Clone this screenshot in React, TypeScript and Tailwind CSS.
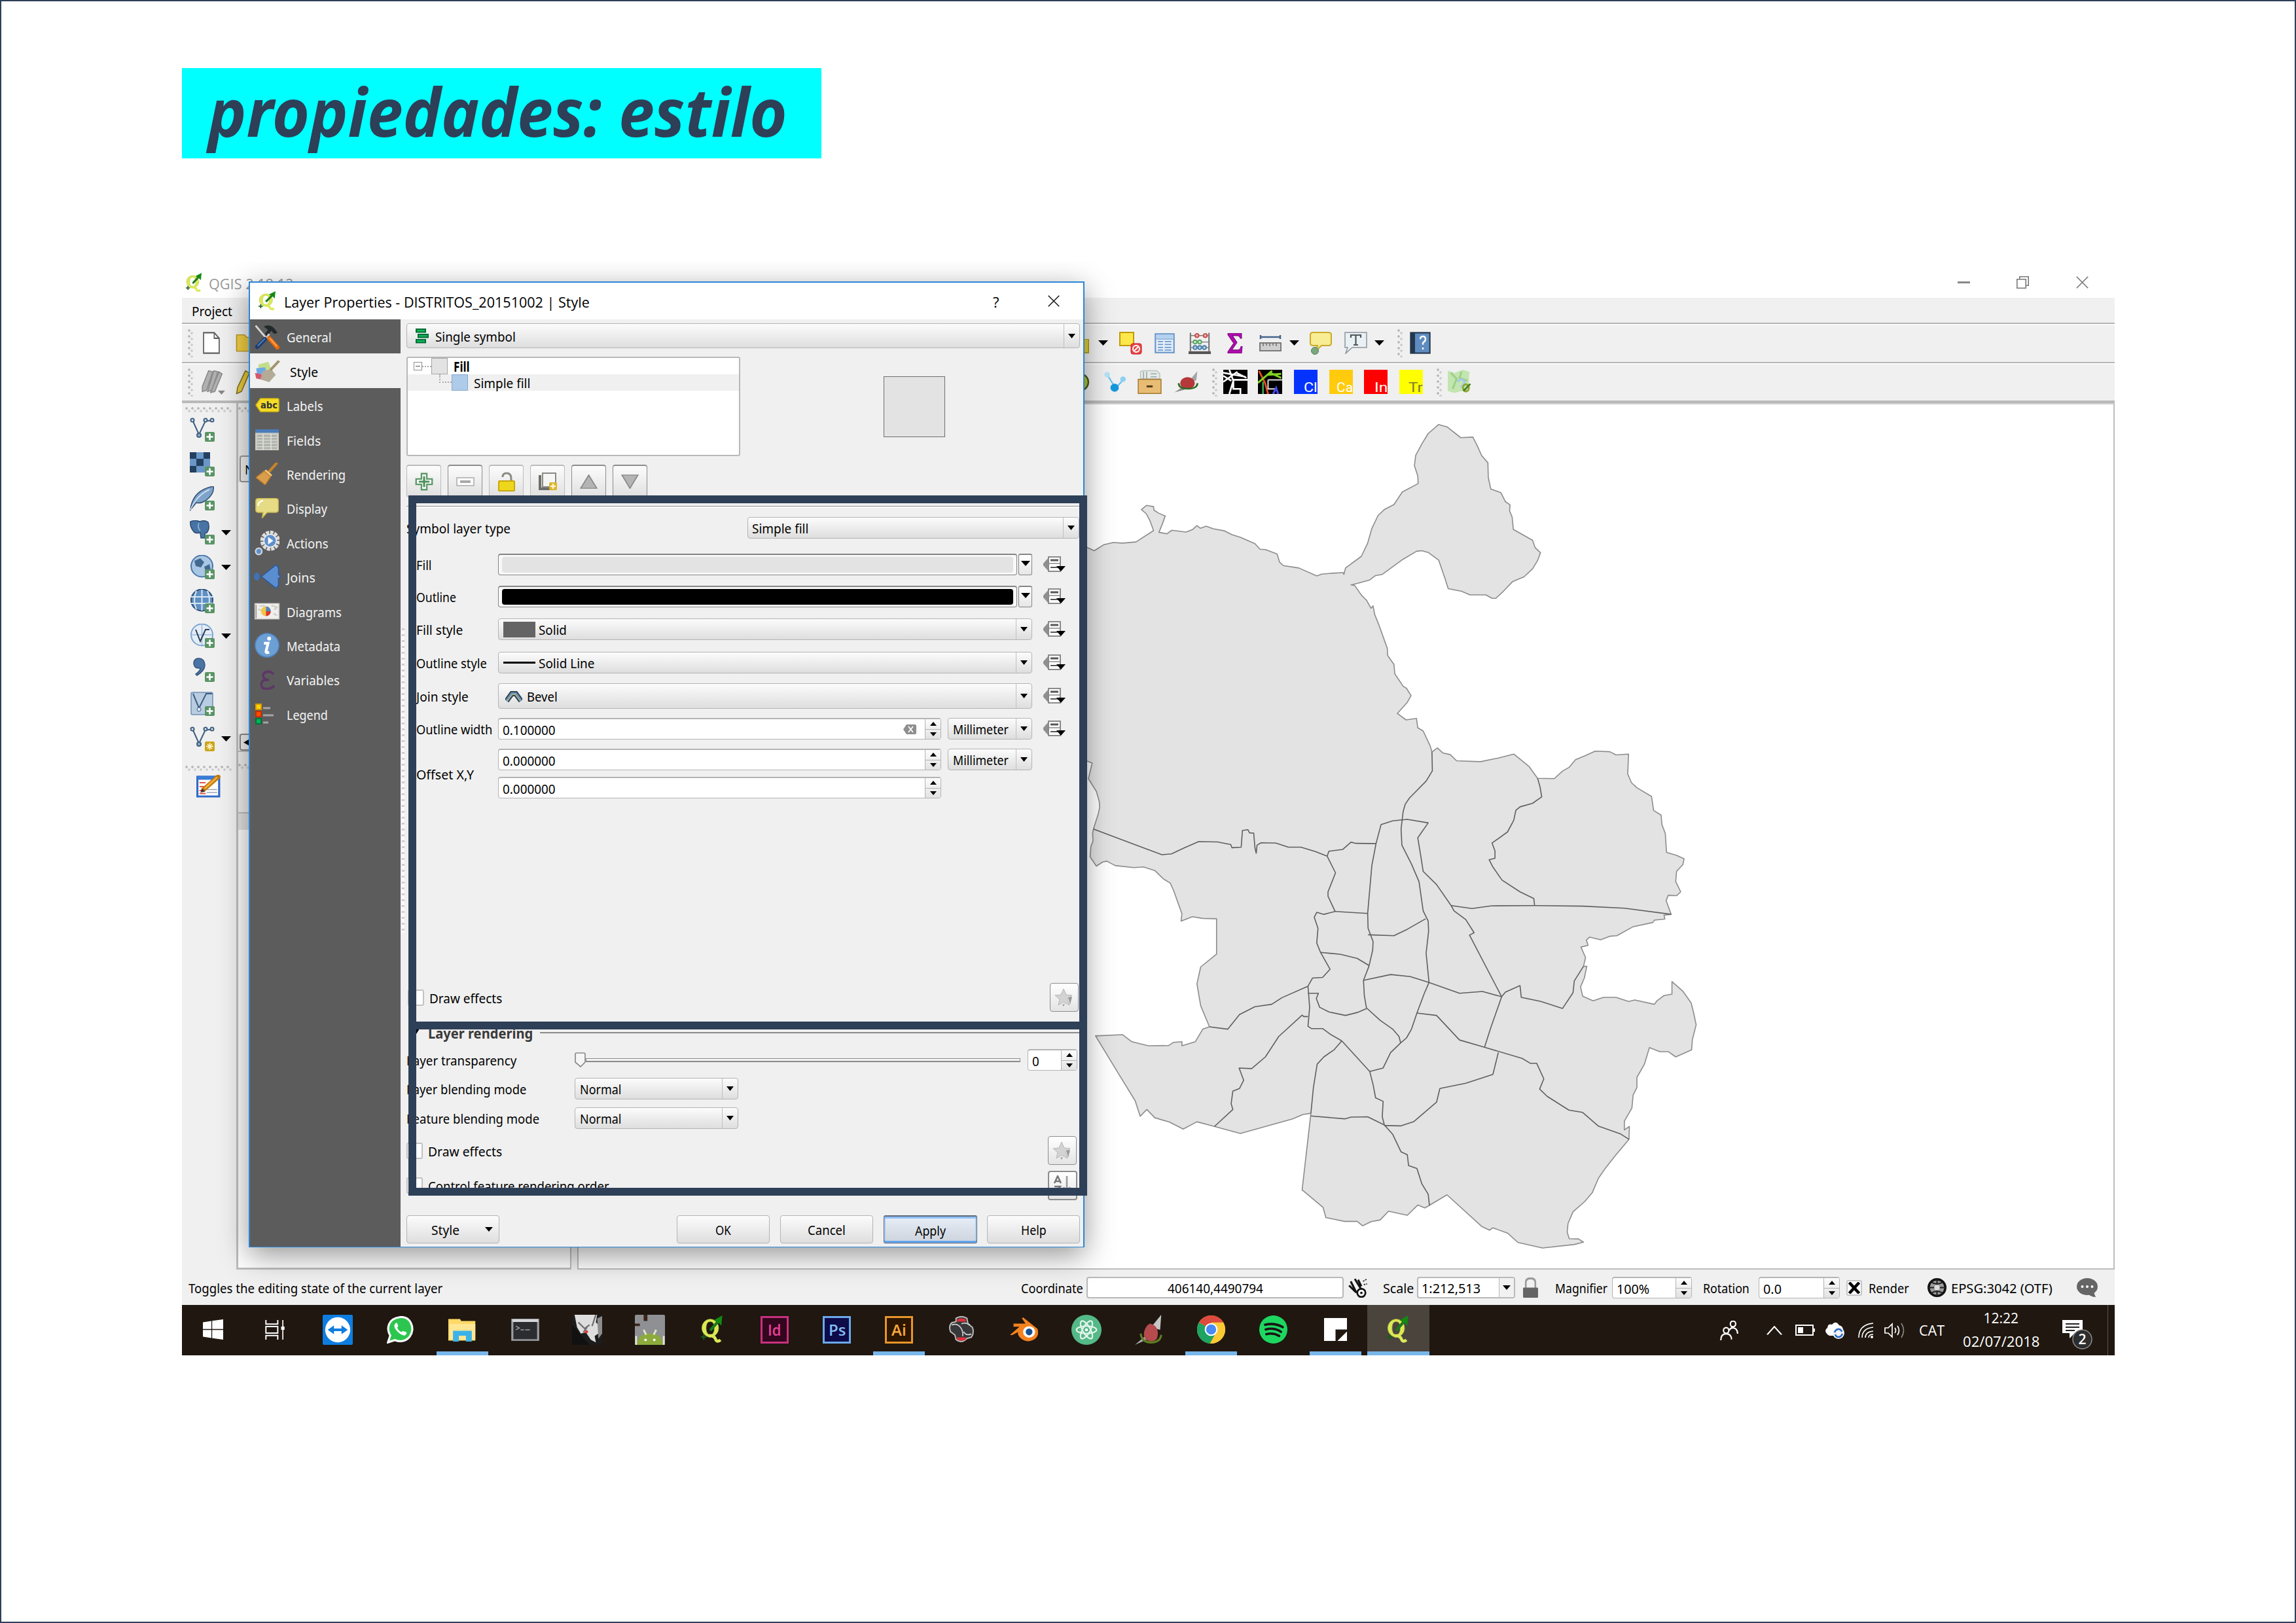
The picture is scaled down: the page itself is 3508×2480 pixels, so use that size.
import { useLayoutEffect, useRef, useState, type ReactNode } from "react";

/* Text set to a fixed advance width; the glyphs are condensed or widened to fill it. */
function T({ w, children, className = "" }: { w: number; children: ReactNode; className?: string }) {
  const ref = useRef<HTMLSpanElement>(null);
  const [scale, setScale] = useState(1);
  useLayoutEffect(() => {
    if (ref.current) setScale(w / ref.current.offsetWidth);
  }, [w]);
  return (
    <span className={`inline-block shrink-0 whitespace-pre leading-none ${className}`} style={{ width: w }}>
      <span ref={ref} className="inline-block origin-left" style={{ transform: `translateY(1px) scaleX(${scale})` }}>
        {children}
      </span>
    </span>
  );
}

function Svg({ className, box = "0 0 24 24", children }: { className: string; box?: string; children: ReactNode }) {
  return (
    <svg viewBox={box} preserveAspectRatio="none" fill="none" className={`block shrink-0 ${className}`}>
      {children}
    </svg>
  );
}

const Down = ({ className = "h-[8px] w-[15px]" }: { className?: string }) => (
  <Svg className={className} box="0 0 10 6"><path d="M0 0h10L5 6z" fill="#000" /></Svg>
);
const Up = () => <Svg className="h-[6px] w-[10px]" box="0 0 10 6"><path d="M0 6h10L5 0z" fill="#000" /></Svg>;

const GripV = ({ className = "" }: { className?: string }) => (
  <div className={`h-[44px] w-[10px] shrink-0 bg-[radial-gradient(circle_at_3px_3px,#bdbdbd_1.8px,transparent_2px),radial-gradient(circle_at_7px_7px,#d0d0d0_1.8px,transparent_2px)] bg-[length:10px_9px] ${className}`} />
);
const GripH = ({ className = "" }: { className?: string }) => (
  <div className={`h-[9px] shrink-0 bg-[radial-gradient(circle_at_2px_2px,#bdbdbd_1.6px,transparent_2px),radial-gradient(circle_at_6px_6px,#d0d0d0_1.6px,transparent_2px)] bg-[length:9px_9px] ${className}`} />
);

function QLogo({ className }: { className: string }) {
  return (
    <Svg className={className} box="0 0 24 30">
      <path d="M10 4a9 9.500 0 100 19 9 9.500 0 000-19zm0 2.500q4.500 0 4.500 7T10 20.500 5.500 13.500 10 6.500z" fill="#dbe957" fillRule="evenodd" stroke="#b9c93c" strokeWidth=".6" />
      <path d="M8 22c5-1 7 1 8 4 1 2 3 2 5 0" stroke="#dbe957" strokeWidth="3.200" />
      <path d="M10 16L18 7" stroke="#1b7a1b" strokeWidth="3" />
      <path d="M14 5l9-5-1 11-3-3z" fill="#128a12" />
      <path d="M0 23h6M3 20v6" stroke="#1c5a1c" strokeWidth="1.500" />
    </Svg>
  );
}

/* ---------- form controls ---------- */

const face = "border-[1.5px] border-[#b4b4b4] rounded-[4px] bg-linear-to-b from-[#fcfcfc] to-[#dedede]";

function Combo({ className, children, arrow = "w-[24px]" }: { className: string; children: ReactNode; arrow?: string }) {
  return (
    <div className={`flex shrink-0 items-center ${face} ${className}`}>
      <div className="flex min-w-0 flex-1 items-center">{children}</div>
      <div className={`flex h-full shrink-0 items-center justify-center border-l-[1.5px] border-[#c0c0c0] ${arrow}`}>
        <Down className="h-[7px] w-[11px]" />
      </div>
    </div>
  );
}

function Spin({ className, children }: { className: string; children: ReactNode }) {
  return (
    <div className={`flex shrink-0 items-center rounded-[4px] border-[1.5px] border-t-2 border-[#b4b4b4] bg-white ${className}`}>
      <div className="flex min-w-0 flex-1 items-center pl-[6px]">{children}</div>
      <div className="flex h-full w-[24px] shrink-0 flex-col border-l-[1.5px] border-[#b4b4b4] bg-linear-to-b from-[#fcfcfc] to-[#e2e2e2]">
        <div className="flex flex-1 items-center justify-center border-b-[1.5px] border-[#b4b4b4]"><Up /></div>
        <div className="flex flex-1 items-center justify-center"><Down className="h-[6px] w-[10px]" /></div>
      </div>
    </div>
  );
}

const DataDefined = () => (
  <Svg className="ml-[16px] h-[25px] w-[36px]" box="0 0 36 25">
    <path d="M9 2L1 11v3l8 9z" fill="#8f8f8f" />
    <rect x="9" y="1" width="18" height="22" fill="#fff" stroke="#8a8a8a" strokeWidth="2" />
    <path d="M9 11h18" stroke="#8a8a8a" strokeWidth="1.500" />
    <path d="M12 6h12" stroke="#555" strokeWidth="3" />
    <path d="M12 17h12" stroke="#555" strokeWidth="2" />
    <path d="M21 15h14l-7 8z" fill="#000" />
  </Svg>
);

function ColorButton({ swatch }: { swatch: string }) {
  return (
    <>
      <div className="h-[33px] w-[793px] shrink-0 rounded-[4px] border-[1.5px] border-t-2 border-[#858585] bg-[#f8f8f8] px-[5px] pt-[3px] pb-[3px]">
        <div className={`h-full rounded-[4px] ${swatch}`} />
      </div>
      <div className="ml-[2px] flex h-[33px] w-[21px] shrink-0 justify-center rounded-[3px] border-[1.5px] border-t-2 border-[#858585] bg-linear-to-b from-white to-[#e6e6e6] pt-[9px]">
        <Down className="h-[8px] w-[14px]" />
      </div>
    </>
  );
}

function Field({ label, w, className, children }: { label: string; w: number; className: string; children: ReactNode }) {
  return (
    <div className={`flex shrink-0 items-center pl-[24px] ${className}`}>
      <div className="flex w-[125px] shrink-0"><T w={w}>{label}</T></div>
      {children}
    </div>
  );
}

const Check = () => <div className="size-[25px] shrink-0 rounded-[3px] border-2 border-[#c2c2c2] bg-white" />;

const StarButton = () => (
  <div className="flex size-[44px] shrink-0 items-center justify-center rounded-[4px] border-[1.5px] border-[#8c8c8c] bg-linear-to-b from-white to-[#e4e4e4]">
    <Svg className="h-[28px] w-[30px]" box="0 0 30 28">
      <path d="M14 1l4 9 9 1-7 6 3 9-9-5-8 5 2-9-7-6 9-1z" fill="#d3d3d3" stroke="#b8b8b8" />
      <path d="M21 14l6-1-3 12zM12 25l4-1-2 4z" fill="#999" />
    </Svg>
  </div>
);

/* ---------- dialog ---------- */

const sideIcons: Record<string, ReactNode> = {
  General: (
    <Svg className="h-[38px] w-[38px]">
      <path d="M1 1l11 13" stroke="#d8d8d8" strokeWidth="1.800" />
      <path d="M9 2c5-3 10 0 13 6l-3 1-3-3-4 5-2-2 3-4z" fill="#23282b" />
      <path d="M14 9l-3 5" stroke="#ccc" strokeWidth="2" />
      <path d="M10 14L2.500 21.500" stroke="#1f3c6e" strokeWidth="4" strokeLinecap="round" />
      <path d="M10 13.500L3 20.500" stroke="#4f7fc0" strokeWidth="1.300" />
      <path d="M14 13l8 9" stroke="#ea6a0c" strokeWidth="4" strokeLinecap="round" />
      <path d="M14.500 13l7 8" stroke="#ffa851" strokeWidth="1.200" />
    </Svg>
  ),
  Style: (
    <Svg className="h-[34px] w-[40px]">
      <path d="M4 5l9-3 3 8-11 5z" fill="#c3dd8a" />
      <path d="M2 9l8-1 2 6-9 2z" fill="#6aa9e6" />
      <path d="M1 14l8 2 5 7-12-3z" fill="#d4566f" />
      <path d="M8 12l8-2 4 6-6 8-8-3z" fill="#b3aa98" />
      <path d="M15 11l8-10" stroke="#a2936d" strokeWidth="2.500" />
    </Svg>
  ),
  Labels: (
    <Svg className="h-[22px] w-[37px]" box="0 0 37 22">
      <path d="M8 1h26q2 0 2 2v16q0 2-2 2H8L1 11z" fill="#f5dc28" stroke="#d5b80c" strokeWidth="1.500" />
      <text x="8" y="16" fontSize="14" fontWeight="700" fontFamily="DejaVu Sans" fill="#333" textLength="26" lengthAdjust="spacingAndGlyphs">abc</text>
    </Svg>
  ),
  Fields: (
    <Svg className="h-[32px] w-[36px]">
      <rect width="24" height="24" fill="#c9cbc4" />
      <rect width="24" height="4" fill="#4a7cb8" />
      <path d="M2 7.500h20M2 11h20M2 14.500h20M2 18h20M2 21.500h20" stroke="#9b9e96" />
      <path d="M8 5v19M16 5v19" stroke="#e2e3de" />
    </Svg>
  ),
  Rendering: (
    <Svg className="h-[34px] w-[34px]">
      <path d="M13 11L22 1" stroke="#c58428" strokeWidth="3" strokeLinecap="round" />
      <path d="M9 9l7 6-6 9-10-8z" fill="#d99e4b" stroke="#b97a26" />
      <path d="M10 8l7 6" stroke="#f0c27c" strokeWidth="2" />
    </Svg>
  ),
  Display: (
    <Svg className="h-[32px] w-[36px]">
      <path d="M3 .5h18q2.500 0 2.500 3v10q0 3-2.500 3h-9L7 23l1-6.500H3q-2.500 0-2.500-3v-10q0-3 2.500-3z" fill="#e6dc85" stroke="#c9b650" />
      <path d="M3 9q0-5 5-6" stroke="#fff" strokeWidth="1.500" />
    </Svg>
  ),
  Actions: (
    <Svg className="h-[39px] w-[38px]">
      <circle cx="15" cy="10" r="7.500" stroke="#dedede" strokeWidth="4" strokeDasharray="3 .9" />
      <circle cx="15" cy="10" r="6" fill="#5e90cc" stroke="#eee" />
      <path d="M13 6.500v7l5-3.500z" fill="#fff" />
      <circle cx="4" cy="20" r="3" fill="#5e90cc" stroke="#c9d4e2" strokeWidth="1.500" />
    </Svg>
  ),
  Joins: (
    <Svg className="h-[36px] w-[42px]">
      <ellipse cx="3" cy="12" rx="2.500" ry="4" fill="#3f72b8" />
      <path d="M7 12L20 0l2 3v7l2 2-2 2v7l-2 3z" fill="#5b8ed0" stroke="#2d5a9c" />
    </Svg>
  ),
  Diagrams: (
    <Svg className="h-[26px] w-[40px]">
      <rect x="1" y="1" width="22" height="22" fill="#f0efec" stroke="#c8c8c4" />
      <path d="M2 3v19" stroke="#9a9a9a" />
      <path d="M5 5l5-1M4 9l3 2M16 4l5 2-2 4M18 15l3 3" stroke="#cfcfca" strokeWidth="2" />
      <path d="M11 5a4.500 7 0 000 14z" fill="#f1c640" /><path d="M11 5a4.500 7 0 014.500 7H11z" fill="#5684b8" /><path d="M11 12h4.500a4.500 7 0 01-4.500 7z" fill="#d8382f" />
    </Svg>
  ),
  Metadata: (
    <Svg className="size-[38px]">
      <circle cx="12" cy="12" r="11.500" fill="#6c9fd4" stroke="#4d80ba" />
      <circle cx="14" cy="5.500" r="1.900" fill="#fff" />
      <path d="M9 10h4l-2 8q0 2 3 .5" stroke="#fff" strokeWidth="2.600" />
    </Svg>
  ),
  Variables: (
    <Svg className="h-[30px] w-[25px]">
      <path d="M21 5Q17 1 11 2 4 4 6 8t8 4Q4 11 3 17q0 6 8 6 7 0 11-4" stroke="#5d3767" strokeWidth="3.200" />
    </Svg>
  ),
  Legend: (
    <Svg className="h-[32px] w-[29px]" box="0 0 29 32">
      <rect x="1" y="1" width="8" height="8" fill="#ffd400" stroke="#d79b00" strokeWidth="2" />
      <rect x="1" y="12" width="8" height="8" fill="#ff4d00" stroke="#c62f00" strokeWidth="2" />
      <rect x="1" y="23" width="8" height="8" fill="#00b45a" stroke="#00713a" strokeWidth="2" />
      <path d="M12 7h11M12 18h16M12 29h8" stroke="#a5a5a5" strokeWidth="3" />
    </Svg>
  ),
};

const sections: [string, number][] = [
  ["General", 69], ["Style", 43], ["Labels", 56], ["Fields", 52], ["Rendering", 90], ["Display", 62],
  ["Actions", 64], ["Joins", 44], ["Diagrams", 84], ["Metadata", 82], ["Variables", 81], ["Legend", 63],
];

function Sidebar() {
  return (
    <div className="flex w-[230px] shrink-0 flex-col bg-[#5c5c5c] text-[#f4f4f4]">
      {sections.map(([name, w]) => (
        <div key={name} className={`flex h-[52.4px] shrink-0 items-center pt-px ${name === "Style" ? "bg-[#f0f0f0] text-black" : ""}`}>
          <div className={`flex w-[52px] ${name === "Legend" ? "pl-[8px]" : "justify-center"}`}>{sideIcons[name]}</div>
          <T w={w} className={name === "Style" ? "ml-[9px]" : "ml-[4px]"}>{name}</T>
        </div>
      ))}
    </div>
  );
}

function ToolButton({ dark, children }: { dark?: boolean; children: ReactNode }) {
  return (
    <div className={`flex h-[50px] w-[53px] shrink-0 items-center justify-center rounded-[4px] border-[1.5px] border-t-2 bg-linear-to-b from-[#fcfcfc] to-[#e0e0e0] ${dark ? "border-[#8c8c8c]" : "border-[#bcbcbc]"}`}>
      {children}
    </div>
  );
}

function StylePanel() {
  return (
    <div className="relative flex flex-1 flex-col bg-[#f0f0f0]">
      <Combo className="mt-[6px] ml-[9px] h-[38px] w-[1029px]">
        <Svg className="ml-[13px] h-[23px] w-[20px]" box="0 0 20 23">
          <rect x="1" y="1" width="14" height="4.500" fill="#0cb95c" stroke="#046b35" strokeWidth="2" />
          <rect x="4" y="9" width="15" height="4.500" fill="#0cb95c" stroke="#046b35" strokeWidth="2" />
          <rect x="1" y="17" width="14" height="4.500" fill="#0cb95c" stroke="#046b35" strokeWidth="2" />
        </Svg>
        <T w={123} className="ml-[10px]">Single symbol</T>
      </Combo>

      <div className="mt-[13px] flex h-[152px] shrink-0 pl-[9px]">
        <div className="w-[510px] rounded-[3px] border-2 border-[#b8b8b8] bg-white">
          <div className="flex h-[25px] items-center pl-[9px]">
            <div className="flex size-[13px] items-center justify-center border border-[#909090]"><div className="h-px w-[7px] bg-[#555]" /></div>
            <div className="w-[14px] border-t-2 border-dotted border-[#aaa]" />
            <div className="h-[25px] w-[25px] border-[1.5px] border-[#a6a6a6] bg-[#e3e3e3]" />
            <T w={25} className="ml-[9px] font-bold">Fill</T>
          </div>
          <div className="flex h-[25px] items-center bg-[#f0f0f0] pl-[48px]">
            <div className="mb-[12px] h-[13px] w-[19px] border-b-2 border-l-2 border-dotted border-[#aaa]" />
            <div className="h-[25px] w-[25px] border-[1.5px] border-[#88a9cd] bg-[#aecbea]" />
            <T w={86} className="ml-[9px]">Simple fill</T>
          </div>
        </div>
        <div className="mt-[30px] ml-[219px] h-[93px] w-[94px] border-[1.5px] border-[#6e6e6e] bg-[#e3e3e3]" />
      </div>

      <div className="mt-[13px] flex shrink-0 gap-[10px] pl-[9px]">
        <ToolButton><Svg className="h-[28px] w-[28px]"><path d="M8.500 1.500h7v7h7v7h-7v7h-7v-7h-7v-7h7z" fill="#fff" stroke="#5d9968" strokeWidth="2" /><path d="M12 5v14M5 12h14" stroke="#4f8f5b" strokeWidth="2.600" /></Svg></ToolButton>
        <ToolButton dark><Svg className="h-[14px] w-[28px]" box="0 0 28 14"><rect x="1" y="1" width="26" height="12" fill="#fff" stroke="#bdbdbd" strokeWidth="2" /><path d="M6 7h16" stroke="#a9a9a9" strokeWidth="4" /></Svg></ToolButton>
        <ToolButton><Svg className="h-[30px] w-[26px]" box="0 0 26 30"><path d="M7 8q0-6 6-6 7 0 7 8v5" stroke="#8b8b85" strokeWidth="3" /><rect x="1" y="14" width="24" height="15" rx="1" fill="#eed61c" stroke="#c9a70a" strokeWidth="2" /></Svg></ToolButton>
        <ToolButton><Svg className="h-[28px] w-[30px]" box="0 0 30 28"><path d="M3 4v21h18" stroke="#6d6f6b" strokeWidth="4" /><rect x="7" y="1" width="20" height="21" fill="#f6f6f6" stroke="#8a8a86" strokeWidth="2" /><rect x="17" y="15" width="12" height="12" rx="2" fill="#dcb42a" /><path d="M23 17v8M19 21h8" stroke="#fff6cf" strokeWidth="2.400" /></Svg></ToolButton>
        <ToolButton dark><Svg className="h-[22px] w-[27px]"><path d="M12 1l11 22H1z" fill="#b4b4b4" stroke="#858585" strokeWidth="1.500" /></Svg></ToolButton>
        <ToolButton dark><Svg className="h-[22px] w-[27px]"><path d="M12 23L1 1h22z" fill="#b4b4b4" stroke="#858585" strokeWidth="1.500" /></Svg></ToolButton>
      </div>

      <div className="mt-[13px] ml-[9px] h-[3px] w-[1028px] shrink-0 border-t-[1.5px] border-b-[1.5px] border-t-[#9a9a9a] border-b-white" />

      <div className="mt-[14px] flex shrink-0 items-center pl-[9px]">
        <T w={159}>Symbol layer type</T>
        <Combo className="ml-[362px] h-[33px] w-[507px]"><T w={86} className="ml-[6px]">Simple fill</T></Combo>
      </div>

      <Field label="Fill" w={24} className="mt-[23px] h-[33px]"><ColorButton swatch="bg-[#e3e3e3]" /><DataDefined /></Field>
      <Field label="Outline" w={61} className="mt-[16px] h-[33px]"><ColorButton swatch="bg-black" /><DataDefined /></Field>
      <Field label="Fill style" w={71} className="mt-[17px] h-[33px]">
        <Combo className="h-[33px] w-[816px]"><div className="ml-[7px] h-[24px] w-[49px] bg-[#646464]" /><T w={43} className="ml-[5px]">Solid</T></Combo>
        <DataDefined />
      </Field>
      <Field label="Outline style" w={108} className="mt-[18px] h-[33px]">
        <Combo className="h-[33px] w-[816px]"><div className="ml-[7px] h-[3px] w-[49px] bg-black" /><T w={85} className="ml-[5px]">Solid Line</T></Combo>
        <DataDefined />
      </Field>
      <Field label="Join style" w={80} className="mt-[15px] h-[39px]">
        <Combo className="h-[39px] w-[816px]">
          <Svg className="mt-[4px] ml-[10px] h-[20px] w-[26px]" box="0 0 26 20">
            <path d="M2 15L10 4h6l8 11" stroke="#2f3f4f" strokeWidth="8" /><path d="M2 15L10 4h6l8 11" stroke="#6f96c0" strokeWidth="4" /><path d="M3 15l8-10h4l8 10" stroke="#d8c64a" strokeWidth="1" />
          </Svg>
          <T w={47} className="ml-[7px]">Bevel</T>
        </Combo>
        <DataDefined />
      </Field>
      <Field label="Outline width" w={116} className="mt-[14px] h-[33px]">
        <Spin className="h-[33px] w-[677px]">
          <T w={81}>0.100000</T>
          <Svg className="ml-[531px] h-[15px] w-[20px]" box="0 0 20 15"><path d="M5 0h13q2 0 2 2v11q0 2-2 2H5L0 7.500z" fill="#8f8f8f" /><path d="M8 3l7 9M15 3l-7 9" stroke="#fff" strokeWidth="1.700" /></Svg>
        </Spin>
        <Combo className="ml-[10px] h-[33px] w-[129px]"><T w={85} className="ml-[7px]">Millimeter</T></Combo>
        <DataDefined />
      </Field>
      <Field label="Offset X,Y" w={88} className="mt-[14px] h-[76px]">
        <div className="flex flex-col gap-[10px]">
          <Spin className="h-[33px] w-[677px]"><T w={81}>0.000000</T></Spin>
          <Spin className="h-[33px] w-[677px]"><T w={81}>0.000000</T></Spin>
        </div>
        <Combo className="mb-[43px] ml-[10px] h-[33px] w-[129px]"><T w={85} className="ml-[7px]">Millimeter</T></Combo>
      </Field>

      <div className="mt-[282px] flex h-[44px] shrink-0 items-center pl-[11px]">
        <Check /><T w={111} className="ml-[8px]">Draw effects</T><div className="ml-[837px]"><StarButton /></div>
      </div>

      <div className="mt-[22px] flex h-[20px] shrink-0 items-center pl-[14px] text-[#3a3a3a]">
        <Down className="mr-[13px] h-[12px] w-[15px]" />
        <T w={160} className="font-bold">Layer rendering</T>
        <div className="ml-[11px] h-[2.5px] w-[824px] bg-[#8b8b8b]" />
      </div>

      <div className="mt-[15px] flex h-[33px] shrink-0 items-center pl-[9px]">
        <T w={168}>Layer transparency</T>
        <Svg className="ml-[89px] h-[23px] w-[17px]" box="0 0 17 23"><path d="M1 3q0-2 2-2h11q2 0 2 2v12l-7 7-8-7z" fill="#f5f5f5" stroke="#8a8a8a" strokeWidth="1.700" /></Svg>
        <div className="h-[6px] w-[664px] border-[1.5px] border-b-2 border-[#8a8a8a] bg-[#f4f4f4]" />
        <Spin className="ml-[11px] h-[33px] w-[76px]"><T w={11}>0</T></Spin>
      </div>
      <div className="mt-[11px] flex h-[33px] shrink-0 items-center pl-[9px]">
        <T w={183}>Layer blending mode</T>
        <Combo className="ml-[74px] h-[33px] w-[250px]"><T w={63} className="ml-[7px]">Normal</T></Combo>
      </div>
      <div className="mt-[12px] flex h-[33px] shrink-0 items-center pl-[9px]">
        <T w={203}>Feature blending mode</T>
        <Combo className="ml-[54px] h-[33px] w-[250px]"><T w={63} className="ml-[7px]">Normal</T></Combo>
      </div>
      <div className="mt-[11px] flex h-[44px] shrink-0 items-center pl-[9px]">
        <Check /><T w={113} className="ml-[8px]">Draw effects</T><div className="ml-[834px]"><StarButton /></div>
      </div>
      <div className="mt-[9px] flex h-[45px] shrink-0 items-center pl-[9px]">
        <Check /><T w={277} className="ml-[8px]">Control feature rendering order</T>
        <div className="ml-[670px] flex size-[45px] items-start justify-center rounded-[4px] border-2 border-[#8c8c8c] bg-linear-to-b from-white to-[#e4e4e4] pt-[5px]">
          <Svg className="h-[30px] w-[30px]" box="0 0 30 30"><path d="M2 12L7 1l5 11M4 9h6M2 17h9L2 28h10" stroke="#777" strokeWidth="2.500" /><path d="M21 1v26M16 18l5 8 5-8" stroke="#999" strokeWidth="2.500" /></Svg>
        </div>
      </div>

      <div className="mt-[23px] flex h-[43px] shrink-0 items-stretch pl-[9px]">
        <div className={`flex w-[142px] items-center ${face}`}><T w={43} className="ml-[37px]">Style</T><Down className="ml-[39px] h-[7px] w-[12px]" /></div>
        <div className={`ml-[271px] flex w-[142px] items-center justify-center ${face}`}><T w={24}>OK</T></div>
        <div className={`ml-[16px] flex w-[142px] items-center justify-center ${face}`}><T w={58}>Cancel</T></div>
        <div className="ml-[16px] flex w-[143px] items-center justify-center rounded-[3px] border-[1.5px] border-t-2 border-[#5f6b78] bg-linear-to-b from-[#e8eef7] to-[#ccd3dc] shadow-[inset_0_3px_0_#8fc0f8,inset_0_-3px_0_#64a5ee,inset_2px_0_0_#a9ccf5,inset_-2px_0_0_#a9ccf5]"><T w={47}>Apply</T></div>
        <div className={`ml-[15px] flex w-[142px] items-center justify-center ${face}`}><T w={39}>Help</T></div>
      </div>

      {/* splitter handle */}
      <div className="absolute top-[472px] left-[2px] h-[466px] w-[4px] bg-[repeating-linear-gradient(to_bottom,#cfcfcf_0_3px,#fafafa_3px_9px)]" />
    </div>
  );
}

function Dialog() {
  return (
    <div className="absolute top-[30px] left-[102px] flex h-[1476px] w-[1277px] flex-col border-2 border-b-[1.5px] border-[#2a86d6] bg-[#f0f0f0] shadow-[0_12px_42px_rgba(0,0,0,0.42)]">
      <div className="flex h-[56px] shrink-0 items-center bg-white pl-[13px] font-['Open_Sans',sans-serif] text-[22px]">
        <QLogo className="h-[30px] w-[27px]" />
        <T w={467} className="ml-[12px]">Layer Properties - DISTRITOS_20151002 | Style</T>
        <T w={10} className="ml-[616px]">?</T>
        <Svg className="ml-[74px] size-[18px]"><path d="M1 1l22 22M23 1L1 23" stroke="#111" strokeWidth="2" /></Svg>
      </div>
      <div className="flex flex-1"><Sidebar /><StylePanel /></div>
    </div>
  );
}

/* ---------- main window ---------- */

const plus = <g><rect x="23" y="22" width="15" height="15" rx="2" fill="#5a9466" /><path d="M30.500 24.500v10M25.500 29.500h10" stroke="#fff" strokeWidth="2.600" /></g>;
const vee = <g stroke="#3f5f80" strokeWidth="2"><path d="M5 6l9 20L24 5h10" /><circle cx="4" cy="4" r="2.500" fill="#e6eef6" /><circle cx="24" cy="4" r="2.500" fill="#e6eef6" /><circle cx="34" cy="4" r="2.500" fill="#e6eef6" /><circle cx="14" cy="27" r="3" fill="#8fb0d0" /></g>;

const tools: { art: ReactNode; menu?: boolean }[] = [
  { art: <>{vee}{plus}</> },
  { art: <><rect x="0" y="0" width="31" height="31" fill="#6b97c7" /><path d="M0 0h10v10H0zM21 0h10v10H21zM10 10h11v11H10zM0 21h10v10H0z" fill="#23405f" />{plus}</> },
  { art: <><path d="M1 36Q4 6 36 0q2 12-12 22-8 5-14 3z" fill="#7fa4cc" stroke="#2e4d70" strokeWidth="1.500" /><path d="M1 36Q10 14 30 5" stroke="#dbe8f5" strokeWidth="1.500" />{plus}</> },
  { art: <><path d="M1 2q8-3 14 0 8-3 13 1 3 10-2 16l-3 1v7h-6l-1-8q-8 2-11-3Q0 10 1 2z" fill="#4774a5" stroke="#2b4c72" strokeWidth="1.500" /><path d="M14 4q-3 7 2 12" stroke="#9ab9da" strokeWidth="1.500" />{plus}</>, menu: true },
  { art: <><circle cx="18.500" cy="17" r="16.500" fill="#a9c6e4" stroke="#4a77a8" strokeWidth="2" /><path d="M7 9l9-4 6 6-5 8-8-2zM22 18l8-4 2 9-7 5z" fill="#41698f" />{plus}</>, menu: true },
  { art: <><circle cx="18.500" cy="17" r="16.500" fill="#5f8fc2" stroke="#2d4f77" strokeWidth="2" /><path d="M2 12h33M2 22h33M18.500 1v32M10 3q-6 14 0 28M27 3q6 14 0 28" stroke="#d7e6f4" strokeWidth="2" />{plus}</> },
  { art: <><circle cx="18.500" cy="17" r="16.500" fill="#e4edf7" stroke="#7ca3cf" strokeWidth="2" /><path d="M2 17h33M18.500 1v32" stroke="#9bbadd" strokeWidth="1.500" /><path d="M9 9l7 18L24 9h6" stroke="#2a3c50" strokeWidth="2" />{plus}</>, menu: true },
  { art: <><path d="M12 1q10-1 11 10 0 9-12 16l-2-2q7-5 7-9-9 1-10-7 0-7 6-8z" fill="#4a74a4" stroke="#34557d" strokeWidth="1.500" />{plus}</> },
  { art: <><rect x="2" y="1" width="33" height="34" rx="2" fill="#b9cde2" stroke="#6d8fb3" strokeWidth="1.500" /><path d="M5 3l9 22L25 3h9" stroke="#3f5f80" strokeWidth="2" /><circle cx="14" cy="27" r="3" fill="#dbe8f5" stroke="#3f5f80" />{plus}</> },
  { art: <>{vee}<rect x="23" y="23" width="15" height="15" rx="2" fill="#c9a51c" /><path d="M30.500 25v11M25 30.500h11M27 27l7 7M34 27l-7 7" stroke="#fff4c4" strokeWidth="1.600" /></>, menu: true },
];

function Toolbox() {
  return (
    <div className="flex w-[83px] shrink-0 flex-col">
      <GripH className="mt-[6px] ml-[5px] w-[72px]" />
      <div className="flex flex-col">
        {tools.map((t, i) => (
          <div key={i} className="flex h-[52.4px] items-center pl-[12px]">
            <Svg className="size-[38px]" box="0 0 38 38">{t.art}</Svg>
            {t.menu && <div className="ml-[10px]"><Down /></div>}
          </div>
        ))}
      </div>
      <GripH className="mt-[15px] ml-[5px] w-[72px]" />
      <Svg className="mt-[5px] ml-[22px] h-[36px] w-[38px]">
        <rect x="1" y="2" width="21" height="20" fill="#fff" stroke="#2f6bc8" strokeWidth="2" />
        <rect x="1" y="1" width="21" height="4" fill="#3a7ad8" />
        <path d="M3 8h6M3 12h5M3 16h4M3 19h6" stroke="#e0554a" strokeWidth="1.200" /><path d="M10 15h10M10 18h10" stroke="#9aa4b4" />
        <path d="M7 15L21 2" stroke="#c47a12" strokeWidth="4.500" strokeLinecap="round" /><path d="M8 14L20 2.500" stroke="#f0ad3c" strokeWidth="1.800" /><path d="M4 18l1.500-4 3 3z" fill="#333" />
      </Svg>
    </div>
  );
}

function AppToolbar() {
  return (
    <div className="flex h-[60px] shrink-0 items-center border-t-2 border-[#b6b6b6] shadow-[inset_0_2px_0_#fbfbfb]">
      <GripV className="ml-[8px]" />
      <Svg className="ml-[14px] h-[34px] w-[26px]"><path d="M1 1h15l7 6v16H1z" fill="#fff" stroke="#5f5f5f" strokeWidth="1.600" /><path d="M16 1v6h7" stroke="#5f5f5f" strokeWidth="1.500" /></Svg>
      <Svg className="ml-[24px] h-[30px] w-[36px]"><path d="M1 2h8l2 3h12v17H1z" fill="#f3cf45" stroke="#b8921a" /></Svg>
      <Svg className="ml-[1247px] mt-[10px] h-[22px] w-[21px]"><rect x="0" y="0" width="23" height="23" fill="#e6d233" stroke="#b89d18" strokeWidth="2" /></Svg>
      <div className="ml-[14px]"><Down /></div>
      <Svg className="ml-[17px] h-[35px] w-[35px]" box="0 0 35 35">
        <rect x="1" y="1" width="21" height="20" fill="#fde74a" stroke="#c39a06" strokeWidth="2" />
        <rect x="18" y="18" width="16" height="16" rx="3" fill="#e8464a" stroke="#c9151b" /><circle cx="26" cy="26" r="5" stroke="#fff" strokeWidth="2" /><path d="M23 29l6-6" stroke="#fff" strokeWidth="2" />
      </Svg>
      <Svg className="ml-[19px] h-[31px] w-[31px]"><rect x="1" y="1" width="22" height="22" fill="#e5effa" stroke="#6c97ca" strokeWidth="1.700" /><rect x="2" y="2" width="20" height="4" fill="#b2d2ef" /><path d="M2 7h20" stroke="#6c97ca" /><path d="M4 10h6M12 10h8M4 13.500h6M12 13.500h8M4 17h6M12 17h8M4 20h6M12 20h8" stroke="#6c97ca" strokeWidth="1.400" /></Svg>
      <Svg className="ml-[21px] h-[34px] w-[34px]"><path d="M2 1v20M22 1v20" stroke="#777" strokeWidth="1.500" /><path d="M0 22.500h24" stroke="#555" strokeWidth="3" /><path d="M2 4h20M2 11h20M2 17h20" stroke="#777" /><g fill="#f0b0b0" stroke="#c8484a" strokeWidth="1.300"><circle cx="9" cy="4" r="2" /><circle cx="18" cy="4" r="2" /></g><g fill="#c5e7c7" stroke="#5ba365" strokeWidth="1.300"><circle cx="7" cy="11" r="2" /><circle cx="12" cy="11" r="2" /></g><g fill="#b5d0e8" stroke="#4a7ea8" strokeWidth="1.300"><circle cx="7" cy="17" r="2" /><circle cx="12" cy="17" r="2" /><circle cx="17" cy="17" r="2" /></g></Svg>
      <Svg className="ml-[25px] h-[31px] w-[24px]"><path d="M1 0h21v6h-2q-1-3-5-3H8l7 8-8 9h9q4 0 5-4h2l-1 8H1v-2l9-10-9-10z" fill="#b00cae" stroke="#7c0a80" /></Svg>
      <Svg className="ml-[25px] h-[25px] w-[34px]" box="0 0 34 25"><path d="M2 3h30M2 0v6M32 0v6" stroke="#45648a" strokeWidth="2.500" /><rect x="1" y="12" width="32" height="12" fill="#cfcfcf" stroke="#6f6f6f" strokeWidth="1.800" /><path d="M6 12v5M11 12v4M16 12v5M21 12v4M26 12v5" stroke="#6f6f6f" strokeWidth="1.500" /></Svg>
      <div className="ml-[12px]"><Down /></div>
      <Svg className="ml-[16px] h-[35px] w-[34px]" box="0 0 34 35"><path d="M5 1h24q4 0 4 4v12q0 4-4 4H18l-8 8 2-8H5q-4 0-4-4V5q0-4 4-4z" fill="#f8ec94" stroke="#c9ab28" strokeWidth="2" /><ellipse cx="8" cy="29" rx="5.500" ry="5.500" fill="#7ba77c" stroke="#557f58" /></Svg>
      <Svg className="ml-[19px] h-[34px] w-[35px]" box="0 0 35 34"><path d="M1 1h33v23H12L2 33l3-9H1z" fill="#e9f1f6" stroke="#8d9499" strokeWidth="1.500" /><path d="M10 9V5h15v4M17.500 5v15M14 20h7" stroke="#555" strokeWidth="2.200" /></Svg>
      <div className="ml-[11px]"><Down /></div>
      <GripV className="ml-[19px]" />
      <Svg className="ml-[10px] h-[34px] w-[32px]"><rect x="1" y="1" width="22" height="22" fill="#5e8cc0" stroke="#23354a" strokeWidth="1.500" /><rect x="1" y="1" width="5" height="22" fill="#22384f" /><path d="M12 8q0-3 3-3t3 3q0 2-3 4v2M15 17v2" stroke="#fff" strokeWidth="1.800" /></Svg>
    </div>
  );
}

const Tile = ({ className, label, w, tone }: { className: string; label: string; w: number; tone: string }) => (
  <div className={`flex h-[37px] w-[36px] shrink-0 items-end justify-end ${className}`}>
    <T w={w} className={`text-[21px] font-['Roboto',sans-serif] ${tone}`}>{label}</T>
  </div>
);

function PluginToolbar() {
  return (
    <div className="flex h-[59px] shrink-0 items-center border-t-2 border-[#b6b6b6] shadow-[inset_0_2px_0_#fbfbfb]">
      <GripV className="ml-[8px]" />
      <Svg className="ml-[10px] h-[38px] w-[38px]"><path d="M8 1l4 1-6 18-4 1 0-5zM13 1l4 1-6 18-4 1zM18 2l3 2-7 17-4 1z" fill="#b0b0b0" stroke="#8a8a8a" /><path d="M17 20h7l-3.500 4z" fill="#888" /></Svg>
      <Svg className="ml-[16px] h-[38px] w-[36px]"><path d="M10 1l4 2-8 18-5 2 1-6z" fill="#e8cb3c" stroke="#7d6b20" /></Svg>
      <Svg className="ml-[1240px] h-[28px] w-[28px]"><circle cx="12" cy="12" r="11" fill="#b5c932" stroke="#42521b" strokeWidth="2" /></Svg>
      <Svg className="ml-[22px] h-[33px] w-[34px]"><path d="M4 4l9 15L22 9" stroke="#6cc4ee" strokeWidth="1.700" /><circle cx="4" cy="4" r="3" fill="#b5e2f8" /><circle cx="21" cy="9" r="3" fill="#8bd1f3" /><circle cx="12" cy="18.500" r="4.500" fill="#1597dd" /></Svg>
      <Svg className="ml-[18px] h-[37px] w-[37px]"><path d="M3 9V2l2-1h14l3 3v5z" fill="#e5ebe9" stroke="#b9c4c1" /><path d="M6 2v7M9 2v7M13 4h6M13 7h6" stroke="#9aa8a5" /><rect x=".7" y="9.500" width="22.600" height="14" fill="#e8bc74" stroke="#a87a35" /><path d="M9 16.500h6" stroke="#55401c" strokeWidth="2" /></Svg>
      <Svg className="ml-[18px] h-[34px] w-[38px]"><path d="M14 12L23 0l-1 10z" fill="#a5a5a5" /><path d="M1 23l8-6 2 3z" fill="#8a8a8a" /><ellipse cx="13.500" cy="13" rx="7" ry="6.500" fill="#b5383b" /><path d="M5 13q0 6 9 6t9-6" stroke="#2f6b25" strokeWidth="1.800" /></Svg>
      <GripV className="ml-[20px]" />
      <Svg className="ml-[8px] h-[37px] w-[37px]"><rect width="24" height="24" fill="#000" /><path d="M0 3l22 4M0 12L14 2M6 0l4 11-4 13M10 10h14M13 3l10 5M10 10v9h7v5M0 6l8 5" stroke="#fff" strokeWidth="1.700" /></Svg>
      <Svg className="ml-[16px] h-[37px] w-[37px]"><rect width="24" height="24" fill="#000" /><path d="M1 1l6 12 3 11" stroke="#ec4a20" strokeWidth="1.800" /><path d="M0 13L14 1M12 3l11 5M10 5l13-1" stroke="#7ed321" strokeWidth="1.900" /><path d="M10 10h14M10 10v9h7" stroke="#ddd" strokeWidth="1.300" /><path d="M15 24l3-6 2 6" stroke="#4a46e8" strokeWidth="2" /><path d="M5 24V12" stroke="#3bbf5a" strokeWidth="1.500" /></Svg>
      <Tile className="ml-[18px] bg-[#0433ff]" label="Cl" w={21} tone="text-white" />
      <Tile className="ml-[18px] bg-[#ffcb0c]" label="Ca" w={25} tone="text-white" />
      <Tile className="ml-[17px] bg-[#fe0000]" label="In" w={20} tone="text-white" />
      <Tile className="ml-[18px] bg-[#ffff00]" label="Tr" w={22} tone="text-[#7a7a30]" />
      <GripV className="ml-[20px]" />
      <Svg className="ml-[8px] h-[37px] w-[36px]"><path d="M0 1l7 2 8-3 7 2-1 20-7-1-7 2-7-2z" fill="#c3e5b0" /><path d="M3 3l6 6-4 10M14 2l-2 6 8 3" stroke="#9dd088" strokeWidth="2" /><path d="M10 12q4-5 7 0-1 4-4 5" stroke="#a8c6ea" strokeWidth="2" /><ellipse cx="18.500" cy="18" rx="3" ry="3.500" stroke="#93a733" strokeWidth="2" /><path d="M16 21l7-7" stroke="#3d7a1f" strokeWidth="1.700" /></Svg>
    </div>
  );
}

/* ---------- map ---------- */

const north =
  "20,520 36,532 50,541 60,532 72,521 95,513 118,515 150,511 192,472 184,440 175,415 163,400 175,386 192,390 193,402 205,413 220,422 213,450 205,478 224,483 236,471 270,477 286,468 296,455 304,464 318,457 335,466 362,473 380,486 400,495 435,517 447,536 460,537 488,552 494,580 503,592 540,600 583,627 595,621 620,618 646,616 648,622 652,600 690,560 705,515 715,465 730,420 745,400 768,383 788,340 826,311 825,285 817,250 820,215 835,175 850,140 875,109 895,117 928,154 957,152 967,180 978,215 993,240 994,290 1000,330 1024,342 1035,373 1046,384 1045,405 1051,425 1054,468 1100,505 1106,530 1119,548 1112,575 1100,603 1080,630 1052,647 1030,680 1012,704 1003,704 988,692 950,692 930,680 898,671 890,635 875,573 850,547 835,541 822,543 790,570 740,622 724,626 710,641 680,653 665,658 674,660 690,693 702,710 713,738 718,730 722,760 732,795 752,875 753,900 768,930 770,962 790,1005 798,1012 809,1037 800,1060 776,1098 797,1120 822,1115 825,1147 838,1158 855,1210 859,1230 872,1216 885,1233 903,1239 918,1260 975,1263 1020,1250 1055,1237 1092,1280 1112,1320 1152,1321 1172,1295 1188,1282 1203,1256 1225,1243 1250,1227 1285,1229 1300,1240 1330,1237 1328,1305 1337,1335 1350,1352 1385,1382 1390,1430 1408,1446";
const south =
  "1410,45 1418,75 1421,140 1445,150 1463,162 1460,182 1445,205 1443,240 1455,275 1445,288 1425,287 1420,305 1432,352 1415,355 1417,368 1392,372 1388,380 1340,395 1302,425 1285,427 1263,439 1237,430 1229,440 1233,458 1216,464 1227,500 1222,530 1230,530 1224,570 1215,600 1220,632 1245,648 1270,636 1300,636 1330,650 1345,645 1392,660 1398,648 1415,630 1434,625 1434,582 1460,615 1480,655 1486,690 1492,730 1483,780 1481,816 1443,840 1425,822 1405,822 1380,808 1368,865 1350,910 1350,945 1341,970 1338,1015 1320,1060 1320,1090 1332,1078 1331,1122 1300,1175 1275,1220 1258,1255 1243,1305 1225,1335 1197,1370 1185,1410 1183,1440 1188,1462 1210,1463 1222,1474 1200,1482 1124,1494 1065,1475 1040,1443 1005,1425 997,1433 978,1420 895,1312 853,1348 842,1357 825,1347 800,1382 755,1368 735,1398 713,1404 693,1418 680,1403 650,1403 605,1390 598,1355 548,1295 569,1033 550,1037 525,1052 400,1102 335,1077 296,1062 263,1087 230,1063 195,1048 176,1020 160,1043 148,990 105,890 53,768 118,764 140,788 180,802 228,801 240,790 260,788 260,802 292,788 310,745 326,737 305,665 296,590 305,532 343,488 343,367 310,366 285,360 258,375 260,350 240,270 232,245 215,230 195,202 168,190 145,192 100,185 80,170 70,173 55,187 40,155 42,120 47,100 46,75 48,60 60,6 63,-15 62,-34 55,-69 36,-112 45,-166 34,-172 20,-172";

const borders = [
  "48,60 100,88 150,115 212,148 235,145 265,125 300,103 345,104 377,113 380,124 402,122 405,65 418,62 422,73 432,74 435,125 438,143 440,115 450,107 485,108 515,122 545,122 580,137 608,153",
  "608,153 612,136 645,130 665,105 677,109 725,110",
  "725,110 737,45 765,32 800,27 850,39 825,90 832,150 838,205 870,250 905,322 912,340 940,370 960,415 949,423 1026,634",
  "725,110 715,185 705,349 706,400 718,445 717,475 708,530 695,578 697,630 702,672 735,715 765,745 780,770 784,792",
  "859,-204 860,-139 845,-104 805,-46 795,-25 790,0 785,60 787,115 810,180 828,240 838,340 850,375 851,410 845,485 852,585 840,625 823,690 810,745 798,775 784,792 760,825 742,878 710,890 643,785",
  "608,153 628,210 610,275 610,290 627,342 600,352 583,345 577,362 586,400 583,450 592,482 615,540 597,568 573,570 562,598 566,670 562,735 570,743 597,743 615,762 643,785",
  "627,342 705,349",
  "592,482 640,489 680,503 708,527",
  "706,422 768,425 800,403 844,367",
  "695,578 760,558 807,565 852,585 925,622 980,616 1026,634",
  "562,622 587,622 582,640 590,670 612,686 652,698 680,688 702,675",
  "562,598 500,637 475,660 435,668 398,695 370,745 326,737",
  "562,702 552,702 548,697 492,770 460,840 427,880 397,878 408,920 398,948 382,957 378,1000 382,1020 338,1078",
  "643,785 625,815 600,840 584,865 575,945 569,1033",
  "569,1042 650,1052 665,1046 705,1045 745,1073",
  "710,890 718,935 724,980 742,992 740,1045 745,1073 765,1105 785,1165 800,1175 803,1212 823,1222 835,1275 850,1310 853,1348",
  "745,1075 785,1076 815,1062 870,995 878,948 940,930 1005,900 1018,825",
  "823,690 870,698 925,782 985,807 1075,845 1095,862 1110,862 1127,915 1117,950 1135,975 1187,1022 1220,1030 1258,1077 1310,1103 1331,1122",
  "1026,634 1000,740 985,807",
  "1026,634 1035,618 1070,596 1073,636 1120,650 1172,674 1197,620 1200,580 1222,530",
  "905,322 955,332 1000,323 1105,322 1220,324 1320,331 1432,352",
  "1105,322 1103,298 1070,275 1027,235 1005,190 996,165 1010,160 1010,135 1003,108 1040,70 1055,30 1060,-4 1070,-16 1100,-28 1122,-50 1118,-84 1112,-114",
];

const SOUTH_OFFSET = 1433.6;
const shift = (s: string) =>
  s.split(" ").map((p) => { const [x, y] = p.split(",").map(Number); return `${x},${y + SOUTH_OFFSET}`; }).join(" ");

function MapCanvas() {
  return (
    <div className="flex-1 overflow-hidden border-2 border-[#bcbcbc] border-t-[#d0d0d0] bg-white">
      <svg viewBox="0 0 2344 1320" className="block h-[1320px] w-[2344px]" fill="none">
        <g transform="translate(756 -18) scale(0.63776 0.44643)">
          <polygon points={`${north} ${shift(south)}`} fill="#e3e3e3" stroke="#8c8c8c" strokeWidth="1.6" strokeLinejoin="round" vectorEffect="non-scaling-stroke" />
          {borders.map((b) => (
            <polyline key={b} points={shift(b)} stroke="#5f5f5f" strokeWidth="1.6" strokeLinejoin="round" vectorEffect="non-scaling-stroke" />
          ))}
        </g>
      </svg>
    </div>
  );
}

function LayersColumn() {
  return (
    <div className="flex w-[512px] shrink-0 flex-col border-l-[3px] border-[#bdbdbd]">
      <GripH className="mt-[6px] w-[400px]" />
      <div className="mt-[65px] ml-[2px] flex h-[41px] items-center rounded-[4px] border-2 border-[#9a9a9a] bg-[#f4f4f4] pl-[6px]"><T w={14}>N</T></div>
      <div className="mr-[2px] flex-1 bg-white" />
      <div className="ml-[2px] flex h-[26px] items-center rounded-[4px] border-2 border-[#8c8c8c] bg-[#f4f4f4] pl-[4px]">
        <Svg className="h-[11px] w-[14px]" box="0 0 10 10"><path d="M0 5l7-5v10z" fill="#000" /></Svg>
      </div>
      <div className="h-[94px] border-t-2 border-[#bdbdbd]"><GripH className="mt-[18px] w-[400px]" /></div>
      <div className="flex h-[699px] flex-col border-t-2 border-r-2 border-b-[3px] border-[#bdbdbd] bg-white"><div className="h-[25px] bg-[#e4e4e4]" /></div>
    </div>
  );
}

function StatusBar() {
  return (
    <div className="flex h-[54px] shrink-0 items-center pt-px pl-[10px]">
      <T w={388}>Toggles the editing state of the current layer</T>
      <T w={95} className="ml-[884px]">Coordinate</T>
      <div className="ml-[5px] flex h-[33px] w-[393px] items-center justify-center rounded-[4px] border-2 border-[#b9b9b9] bg-white"><T w={146}>406140,4490794</T></div>
      <Svg className="ml-[7px] h-[30px] w-[30px]"><path d="M3 4l7 14M8 1l8 13M1 9l8 8M12 2l4 8" stroke="#111" strokeWidth="2.400" /><path d="M18 4l5-3M19 8l4-1" stroke="#333" strokeWidth="1.500" strokeDasharray="2 1" /><ellipse cx="16" cy="18" rx="5" ry="5" fill="#fff" stroke="#111" strokeWidth="2.200" /><circle cx="16" cy="18" r="1.500" fill="#111" /></Svg>
      <T w={47} className="ml-[23px]">Scale</T>
      <div className="ml-[5px] flex h-[33px] w-[150px] items-center rounded-[4px] border-2 border-[#b9b9b9] bg-white">
        <T w={90} className="ml-[5px]">1:212,513</T>
        <div className="ml-auto flex h-full w-[23px] items-center justify-center border-l-[1.5px] border-[#b9b9b9] bg-[#f1f1f1]"><Down className="h-[7px] w-[12px]" /></div>
      </div>
      <Svg className="ml-[11px] h-[31px] w-[25px]"><path d="M5 13V6q0-5 7-5t7 5v7" stroke="#9b9b9b" strokeWidth="2.500" /><rect x="1" y="12" width="22" height="12" rx="1" fill="#656565" /></Svg>
      <T w={80} className="ml-[25px]">Magnifier</T>
      <Spin className="ml-[7px] h-[33px] w-[122px]"><T w={50}>100%</T></Spin>
      <T w={71} className="ml-[17px]">Rotation</T>
      <Spin className="ml-[14px] h-[33px] w-[124px]"><T w={28}>0.0</T></Spin>
      <div className="ml-[10px] flex size-[24px] items-center justify-center rounded-[3px] border-2 border-[#c6c6c6] bg-white"><Svg className="h-[18px] w-[18px]"><path d="M2 1l20 22M22 1L2 23" stroke="#000" strokeWidth="6" /></Svg></div>
      <T w={62} className="ml-[10px]">Render</T>
      <Svg className="ml-[28px] size-[29px]"><circle cx="12" cy="12" r="10.500" fill="#9b9b9b" stroke="#111" strokeWidth="3" /><path d="M1 12h22M12 1v22M5 5q7 5 14 0M5 19q7-5 14 0" stroke="#222" strokeWidth="1.700" /><circle cx="12" cy="12" r="3.500" fill="#ddd" /></Svg>
      <T w={155} className="ml-[7px]">EPSG:3042 (OTF)</T>
      <Svg className="ml-[37px] h-[29px] w-[32px]" box="0 0 32 29"><ellipse cx="16" cy="13" rx="16" ry="13" fill="#656565" /><path d="M16 22h10l3 7q-9 0-13-7z" fill="#656565" /><circle cx="8.500" cy="13" r="2" fill="#fff" /><circle cx="16" cy="13" r="2" fill="#fff" /><circle cx="23.500" cy="13" r="2" fill="#fff" /></Svg>
    </div>
  );
}

/* ---------- taskbar ---------- */

const Adobe = ({ label, className, w }: { label: string; className: string; w: number }) => (
  <div className={`flex h-[42px] w-[43px] items-center justify-center border-[3px] font-['Open_Sans',sans-serif] text-[23px] font-semibold ${className}`}><T w={w}>{label}</T></div>
);

const apps: { art: ReactNode; open?: boolean; active?: boolean }[] = [
  { art: <Svg className="h-[31px] w-[31px]"><path d="M0 3.500l10-1.500v9.500H0zM11 1.800L24 0v11.500H11zM0 12.500h10V22L0 20.500zM11 12.500h13V24l-13-1.800z" fill="#fff" /></Svg> },
  { art: <Svg className="h-[30px] w-[31px]"><path d="M1 0v5h14V0M1 24v-5h14v5M1 8h14v8H1z" stroke="#fff" strokeWidth="1.500" /><path d="M21 0v24" stroke="#fff" strokeWidth="1.300" /><rect x="19" y="8" width="4" height="4" fill="#fff" /></Svg> },
  { art: <Svg className="size-[46px]"><rect width="24" height="24" rx="1" fill="#0e7de0" /><circle cx="12" cy="12" r="10" fill="#fff" /><path d="M4 12l5-3.500v2.500h6V8.500l5 3.500-5 3.500V13H9v2.500z" fill="#0e7de0" /></Svg> },
  { art: <Svg className="size-[42px]"><path d="M1 23l2-6Q0 12 2 7t9-6q7-1 10 5t-1 12q-5 6-13 3z" fill="#2cc64f" stroke="#fff" strokeWidth="1.800" /><path d="M8 6q-3 2 0 6t7 5q3-1 2-3l-3-1-1 1q-3-1-4-4l1-1-1-3z" fill="#fff" /></Svg> },
  { art: <Svg className="h-[36px] w-[43px]"><path d="M0 1h10l1 2h12v20H0z" fill="#ffd867" /><path d="M1 6h22v16H1z" fill="#ffe694" /><path d="M4 24V13h16v11h-5v-6H9v6z" fill="#3bb2e8" /></Svg>, open: true },
  { art: <Svg className="h-[34px] w-[43px]"><rect x="1" y="1" width="22" height="22" fill="#2c2d30" stroke="#989ca2" strokeWidth="1.800" /><path d="M1 2h22" stroke="#d5d7da" strokeWidth="3" /><path d="M4 8l3 2-3 2M8 12h3M12 12h4" stroke="#9a9ca0" /></Svg> },
  { art: <Svg className="size-[46px]"><rect width="24" height="24" fill="#1c1c1c" /><path d="M2 0h18l-1 6 3 3-1 6-3 2 1 5-4-2-4-6-4 1-3-5z" fill="#dedede" /><path d="M19 0l-3 9M5 6l5 5 4-3M9 14l3-4" stroke="#6f6f6f" strokeWidth="1.200" /><path d="M20 3l4-2v14l-3 4z" fill="#8d8d8d" /><path d="M0 8l14 16H0z" fill="#111" /><circle cx="11.500" cy="13.500" r="1.300" fill="#e03a3a" /></Svg> },
  { art: <Svg className="size-[46px]"><rect width="24" height="24" rx="1" fill="#8f9093" /><path d="M7 0v5h3V0M0 7h4v2H0z" fill="#3a2418" /><path d="M2 24q0-9 10-9t10 9z" fill="#8cab3c" /><path d="M7 12l2 4M17 12l-2 4M1 17v7M23 17v7" stroke="#dfe6c9" strokeWidth="1.500" /><circle cx="8.500" cy="20" r="1" fill="#fff" /><circle cx="15.500" cy="20" r="1" fill="#fff" /></Svg> },
  { art: <QLogo className="h-[43px] w-[34px]" /> },
  { art: <Adobe label="Id" w={20} className="border-[#c8307f] bg-[#32061d] text-[#e8409a]" /> },
  { art: <Adobe label="Ps" w={26} className="border-[#6ca9ea] bg-[#0d0b4a] text-[#85bdf5]" /> },
  { art: <Adobe label="Ai" w={23} className="border-[#e8962a] bg-[#2c1600] text-[#f9a83e]" />, open: true },
  { art: <Svg className="h-[41px] w-[40px]"><path d="M7 2q5-3 10 0l1 5 4 3q2 5-1 9l-4 1q-5 5-10 1l-1-4-4-3Q0 9 3 6l4-1z" fill="#38383a" stroke="#b8b8b8" strokeWidth="1.200" /><path d="M8 5V3q4-2 8 0v2zM8 19v2q4 2 8 0v-2z" fill="#e0303c" /><path d="M3 8q5-2 8 2t2 8M21 16q-5 2-7-2M12 7q3-2 8 1" stroke="#d0d0d0" strokeWidth="1" /></Svg> },
  { art: <Svg className="h-[38px] w-[44px]"><path d="M11 0l12 11q2 8-4 11t-11-3Q6 16 7 14l-5 3H0l8-8H3V6h10L10 1z" fill="#f58220" /><ellipse cx="16" cy="14" rx="5" ry="5.500" fill="#fff" /><ellipse cx="16" cy="14" rx="2.800" ry="3.300" fill="#16518f" /></Svg> },
  { art: <Svg className="size-[46px]"><circle cx="12" cy="12" r="12" fill="#54b987" /><g stroke="#e8f6ee" strokeWidth="1.100"><ellipse cx="12" cy="12" rx="3" ry="8" transform="rotate(30 12 12)" /><ellipse cx="12" cy="12" rx="3" ry="8" transform="rotate(-30 12 12)" /><ellipse cx="12" cy="12" rx="8" ry="3" /></g><circle cx="12" cy="12" r="1.200" fill="#fff" /></Svg> },
  { art: <Svg className="h-[46px] w-[42px]"><path d="M14 10L23 0l-1 12z" fill="#c6c6c6" /><path d="M0 24l9-7 1 3z" fill="#a9a9a9" /><path d="M13 7q7 1 7 8t-7 6q-6-1-5-7 1-5 5-7z" fill="#b54b4d" /><path d="M5 15q1 7 9 7t9-6" stroke="#5f7d22" strokeWidth="1.800" /></Svg> },
  { art: <Svg className="size-[43px]"><circle cx="12" cy="12" r="12" fill="#fbc934" /><path d="M12 12L1.600 6A12 12 0 0122.400 6z" fill="#dd4b3e" /><path d="M12 12L1.600 6a12 12 0 009.400 18l4-7z" fill="#1ea362" /><path d="M12 6h10.400A12 12 0 0111 24l5-9z" fill="#fbc934" /><circle cx="12" cy="12" r="5.500" fill="#fff" /><circle cx="12" cy="12" r="4.300" fill="#4a8af4" /></Svg>, open: true },
  { art: <Svg className="size-[43px]"><circle cx="12" cy="12" r="12" fill="#1ed760" /><path d="M5 8q8-2 15 2M5.500 12q7-2 13 2M6 16q6-1.500 11 1.500" stroke="#191414" strokeWidth="2" strokeLinecap="round" /></Svg> },
  { art: <Svg className="h-[35px] w-[35px]"><path d="M0 0h24v12h-12v12H0z" fill="#fff" /><path d="M14 24l10-10v10z" fill="#fff" /></Svg>, open: true },
  { art: <QLogo className="h-[43px] w-[34px]" />, open: true, active: true },
];

function Taskbar() {
  return (
    <div className="flex h-[77px] shrink-0 bg-[#1f1710] text-white">
      {apps.map((a, i) => (
        <div key={i} className={`flex h-full w-[95.3px] shrink-0 flex-col items-center ${a.active ? "bg-[#4b443d]" : ""}`}>
          <div className="flex h-[71px] items-center pt-[4px]">{a.art}</div>
          {a.open && <div className={`h-[6px] bg-[#78b7ea] ${a.active ? "w-full" : "w-[79px]"}`} />}
        </div>
      ))}
      <div className="flex items-center pl-[444px] font-['Open_Sans',sans-serif] text-[21px]">
        <Svg className="h-[30px] w-[28px]"><circle cx="17" cy="4" r="3.500" stroke="#fff" strokeWidth="1.800" /><circle cx="8" cy="12" r="3.500" stroke="#fff" strokeWidth="1.800" /><path d="M1 24q0-8 7-8t7 7M12 12q2-4 6-3 5 1 5 7" stroke="#fff" strokeWidth="1.800" /></Svg>
        <Svg className="ml-[43px] h-[14px] w-[24px]"><path d="M1 23L12 2l11 21" stroke="#fff" strokeWidth="2.500" /></Svg>
        <Svg className="ml-[20px] h-[17px] w-[30px]" box="0 0 30 17"><rect x="1" y="1" width="26" height="15" stroke="#fff" strokeWidth="2" /><rect x="4" y="4" width="8" height="9" fill="#fff" /><path d="M29 6v5" stroke="#fff" strokeWidth="2" /></Svg>
        <Svg className="ml-[15px] h-[26px] w-[32px]" box="0 0 32 26"><path d="M4 19Q-2 13 4 9 5 2 11 4q6-7 11 1 6 1 6 8l-6 8H7z" fill="#fff" /><circle cx="21" cy="17" r="9" fill="#f2f2f2" /><path d="M15 16q2-5 6-5t5 4M27 18q-2 5-6 5t-5-4" stroke="#2467c8" strokeWidth="2.500" /></Svg>
        <Svg className="ml-[19px] h-[24px] w-[24px]"><path d="M1 23Q1 3 23 1M6 23Q6 9 23 7M11 23q0-9 12-10M16 23q0-5 7-5" stroke="#fff" strokeWidth="1.600" /><circle cx="21" cy="22" r="2" fill="#fff" /></Svg>
        <Svg className="ml-[16px] h-[26px] w-[32px]" box="0 0 32 26"><path d="M1 9h5l6-6v20l-6-6H1z" stroke="#fff" strokeWidth="1.700" /><path d="M16 9q3 4 0 8M20 6q5 7 0 14" stroke="#fff" strokeWidth="1.700" /><path d="M26 2q7 11 0 22" stroke="#8a857f" strokeWidth="1.700" /></Svg>
        <T w={39} className="ml-[21px]">CAT</T>
        <div className="mb-[2px] ml-[28px] flex flex-col items-center gap-[15px]"><T w={54}>12:22</T><T w={117}>02/07/2018</T></div>
        <Svg className="mt-[14px] ml-[35px] h-[47px] w-[47px]" box="0 0 47 47">
          <path d="M0 1h31v20H19l-8 8v-8H0z" fill="#fff" /><path d="M5 7h21M5 12h21M5 17h14" stroke="#222" strokeWidth="2" />
          <circle cx="30.500" cy="30.500" r="14.500" fill="#2d2d2d" stroke="#8b8b8b" strokeWidth="1.500" />
          <text x="30.500" y="38" fontSize="21" fontWeight="600" fontFamily="Open Sans" fill="#fff" textAnchor="middle">2</text>
        </Svg>
        <div className="ml-[22px] h-[77px] w-px bg-[#5c554e]" />
      </div>
    </div>
  );
}

function QgisWindow() {
  return (
    <div className="relative ml-[276px] flex h-[1671px] w-[2953px] flex-col overflow-hidden bg-[#f0f0f0] font-['Noto_Sans',sans-serif] text-[20.5px] text-black">
      <div className="flex h-[55px] shrink-0 items-center bg-white pt-[8px] pl-[6px] font-['Open_Sans',sans-serif] text-[22px] text-[#999]">
        <QLogo className="h-[30px] w-[25px]" />
        <T w={129} className="ml-[10px]">QGIS 2.18.12</T>
        <Svg className="ml-[2543px] h-[3px] w-[19px]"><rect width="24" height="24" fill="#888" /></Svg>
        <Svg className="ml-[71px] size-[19px]"><path d="M6 5V1h17v17h-5M1 6h17v17H1z" stroke="#777" strokeWidth="2" /></Svg>
        <Svg className="ml-[72px] size-[19px]"><path d="M1 1l22 22M23 1L1 23" stroke="#777" strokeWidth="2" /></Svg>
      </div>
      <div className="flex h-[38px] shrink-0 items-center pl-[15px]"><T w={62}>Project</T></div>
      <AppToolbar />
      <PluginToolbar />
      <div className="h-[4px] shrink-0 bg-[#b9b9b9]" />
      <div className="flex h-[1324px] shrink-0">
        <Toolbox />
        <LayersColumn />
        <div className="w-[9px] shrink-0" />
        <MapCanvas />
      </div>
      <StatusBar />
      <Taskbar />
      <Dialog />
      {/* highlight frames over the dialog */}
      <div className="absolute top-[357px] left-[346px] h-[816px] w-[1037px] border-[12px] border-[#2e3f58]" />
      <div className="absolute top-[1161px] left-[346px] h-[266px] w-[1037px] border-[12px] border-[#2e3f58]" />
    </div>
  );
}

export default function App() {
  return (
    <main className="flex h-[2480px] w-[3508px] flex-col overflow-hidden border-2 border-[#2e3f58] bg-white">
      <h1 className="mt-[102px] mb-[158px] ml-[276px] flex h-[138px] w-[977px] shrink-0 items-center bg-[#00ffff] pb-[9px] pl-[40px] font-['Noto_Sans',sans-serif] text-[102px] font-bold text-[#2e3f58] italic">
        <T w={885}>propiedades: estilo</T>
      </h1>
      <QgisWindow />
    </main>
  );
}
